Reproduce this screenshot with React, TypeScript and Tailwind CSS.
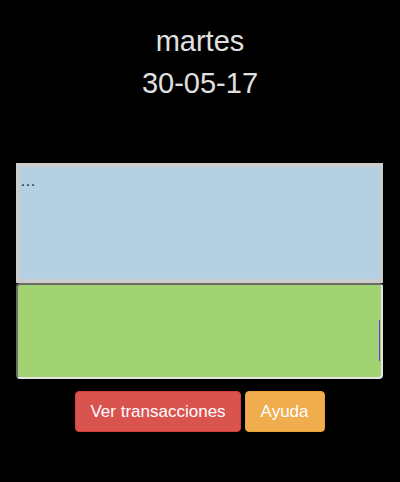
const App = () => {
  return (
    <div
      className="min-h-screen bg-black px-4 pt-5 text-[#e0e0e0]"
      style={{ fontFamily: '"Liberation Sans", Arial, sans-serif' }}
    >
      <div className="text-center text-[29px] leading-[42px]">
        <div>martes</div>
        <div>30-05-17</div>
      </div>

      <div className="mt-[59px] h-[120px] w-[367px] border-4 border-r-[3px] border-[#cccccc] bg-[#b3d1e3] pt-[2px] text-base leading-6 text-[#2a2a2a]">
        …
      </div>

      <div className="relative h-[96px] w-[367px] rounded-[4px] border-2 border-t-[#6b6b6b] border-l-[#6b6b6b] border-r-[#e4e4e4] border-b-[#e4e4e4] bg-[#a2d372]">
        <span className="absolute right-[1px] top-[35px] h-[41px] w-px bg-[#7b2fd6]" />
      </div>

      <div className="mt-3 flex justify-center gap-1 text-[17px] text-white">
        <button className="h-[41px] rounded-[4px] border border-[#d43f3a] bg-[#d9534f] px-[14px]">
          Ver transacciones
        </button>
        <button className="h-[41px] rounded-[4px] border border-[#eea236] bg-[#f0ad4e] px-[15px]">
          Ayuda
        </button>
      </div>
    </div>
  );
};

export default App;
